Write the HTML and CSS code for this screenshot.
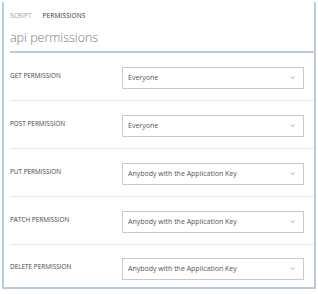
FILE: index.html
```html
<!DOCTYPE html>
<html lang="en">
<head>
<meta charset="UTF-8" />
<meta name="viewport" content="width=device-width, initial-scale=1" />
<title>API Permissions</title>
<link rel="stylesheet" href="styles.css">
</head>
<body>

<div class="panel">
  <div class="tabs">
    <span class="tab">SCRIPT</span>
    <span class="tab active">PERMISSIONS</span>
  </div>

  <h1 class="title">api permissions</h1>

  <div class="rows">
    <div class="row">
      <label class="label">GET PERMISSION</label>
      <div class="select">
        <span>Everyone</span>
        <svg class="chevron" viewBox="0 0 8 5" width="5" height="3"><path d="M1 1l3 3 3-3" fill="none" stroke="#888" stroke-width="1.3"/></svg>
      </div>
    </div>
    <div class="row">
      <label class="label">POST PERMISSION</label>
      <div class="select">
        <span>Everyone</span>
        <svg class="chevron" viewBox="0 0 8 5" width="5" height="3"><path d="M1 1l3 3 3-3" fill="none" stroke="#888" stroke-width="1.3"/></svg>
      </div>
    </div>
    <div class="row">
      <label class="label">PUT PERMISSION</label>
      <div class="select">
        <span>Anybody with the Application Key</span>
        <svg class="chevron" viewBox="0 0 8 5" width="5" height="3"><path d="M1 1l3 3 3-3" fill="none" stroke="#888" stroke-width="1.3"/></svg>
      </div>
    </div>
    <div class="row">
      <label class="label">PATCH PERMISSION</label>
      <div class="select">
        <span>Anybody with the Application Key</span>
        <svg class="chevron" viewBox="0 0 8 5" width="5" height="3"><path d="M1 1l3 3 3-3" fill="none" stroke="#888" stroke-width="1.3"/></svg>
      </div>
    </div>
    <div class="row">
      <label class="label">DELETE PERMISSION</label>
      <div class="select">
        <span>Anybody with the Application Key</span>
        <svg class="chevron" viewBox="0 0 8 5" width="5" height="3"><path d="M1 1l3 3 3-3" fill="none" stroke="#888" stroke-width="1.3"/></svg>
      </div>
    </div>
  </div>
</div>

</body>
</html>
```

FILE: styles.css
```css
body {
  margin: 0;
  font-family: "Open Sans", "Noto Sans", sans-serif;
  background: #fff;
}
.panel {
  margin: 2px 2px 0 2px;
  height: 287px;
  border: 2px solid #b2cbe6;
  border-top: none;
  padding-left: 6px;
  box-sizing: border-box;
}
.tabs {
  display: flex;
  gap: 11px;
  padding-top: 6px;
  height: 14px;
  align-items: center;
}
.tab {
  font-size: 6.5px;
  color: #999;
  letter-spacing: 0.1px;
}
.tab.active {
  color: #333;
}
.title {
  margin: 0;
  font-size: 12.5px;
  font-weight: 300;
  color: #777;
  height: 29px;
  line-height: 32px;
  border-bottom: 2px solid #b2cbe6;
}
.rows {
  display: flex;
  flex-direction: column;
}
.row {
  display: flex;
  align-items: center;
  height: 48px;
  padding-right: 10px;
  border-bottom: 1px solid #e8e8e8;
  box-sizing: border-box;
}
.row:last-child {
  border-bottom: none;
  height: 45px;
}
.label {
  width: 112px;
  font-size: 6.4px;
  color: #444;
  margin-top: -3px;
}
.select {
  flex: 1;
  height: 22px;
  border: 1px solid #cacaca;
  box-sizing: border-box;
  display: flex;
  align-items: center;
  justify-content: space-between;
  padding: 0 8px 0 5px;
  font-size: 7px;
  color: #555;
  margin-top: 2px;
}
.chevron {
  display: block;
}
```
